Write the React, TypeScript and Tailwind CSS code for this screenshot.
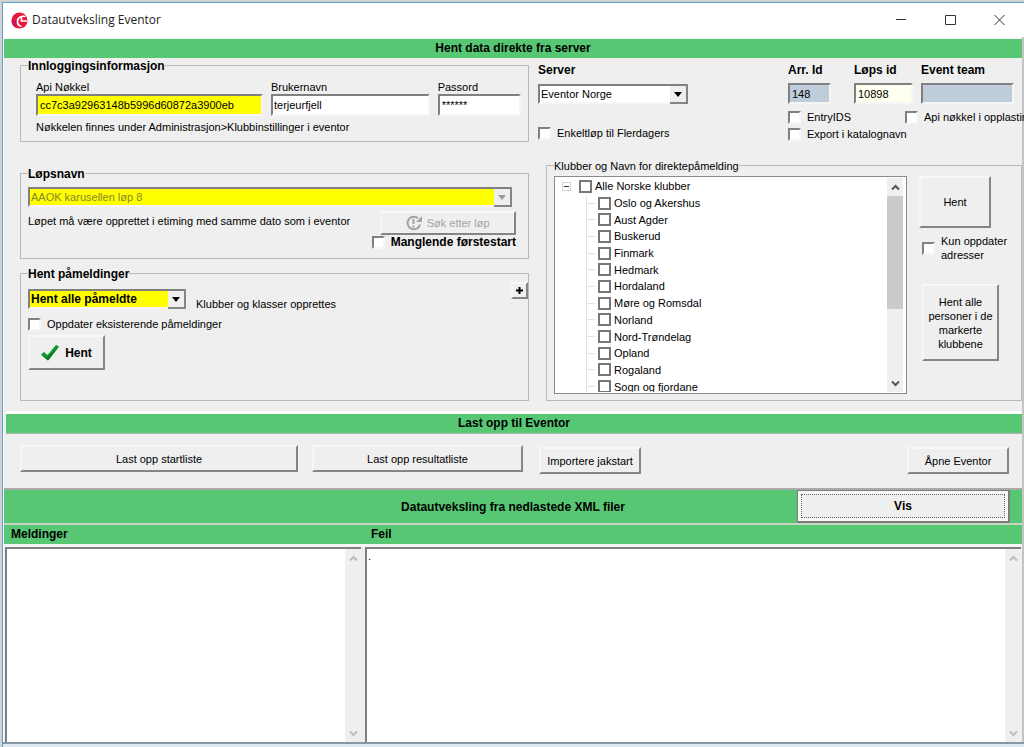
import * as React from "react";
import clsx from "clsx";

const REGIONS = [
  "Oslo og Akershus",
  "Aust Agder",
  "Buskerud",
  "Finmark",
  "Hedmark",
  "Hordaland",
  "Møre og Romsdal",
  "Norland",
  "Nord-Trøndelag",
  "Opland",
  "Rogaland",
  "Sogn og fjordane",
];

const sunken =
  "border-2 border-t-[#808080] border-l-[#808080] border-r-[#f6f6f6] border-b-[#f6f6f6]";

function Button({
  className,
  children,
  ...props
}: React.ComponentProps<"button">) {
  return (
    <button
      type="button"
      className={clsx(
        "border-2 border-t-[#f8f8f8] border-l-[#f6f6f6] border-r-[#858585] border-b-[#858585] bg-[#efefef]",
        className
      )}
      {...props}
    >
      {children}
    </button>
  );
}

function Check({
  label,
  className,
  bold,
}: {
  label: React.ReactNode;
  className?: string;
  bold?: boolean;
}) {
  return (
    <label
      className={clsx(
        "flex items-center gap-[6px] whitespace-nowrap",
        bold && "text-xs leading-[14px] font-bold",
        className
      )}
    >
      <input
        type="checkbox"
        className={clsx(
          "size-[13px] shrink-0 appearance-none bg-white checked:bg-gray-500",
          sunken
        )}
      />
      <span>{label}</span>
    </label>
  );
}

function Group({
  title,
  bold = true,
  className,
  children,
}: {
  title: string;
  bold?: boolean;
  className?: string;
  children: React.ReactNode;
}) {
  return (
    <fieldset
      className={clsx("relative min-w-0 border border-[#b9b9b9] px-[7px]", className)}
    >
      <legend
        className={clsx(
          "pt-[2px]",
          bold ? "text-xs leading-[12px] font-bold" : "text-[11px] leading-[12px]"
        )}
      >
        {title}
      </legend>
      {children}
    </fieldset>
  );
}

function DropDown({
  value,
  label,
  className,
  selectClassName,
  disabled,
}: {
  value: string;
  label: string;
  className?: string;
  selectClassName?: string;
  disabled?: boolean;
}) {
  return (
    <div className={clsx("relative", className)}>
      <select
        aria-label={label}
        disabled={disabled}
        className={clsx(
          "block h-5 w-full appearance-none border-2 border-t-[#808080] border-r-[#909090] border-b-[#f6f6f6] border-l-[#808080] pr-5 pl-px opacity-100",
          selectClassName
        )}
      >
        <option>{value}</option>
      </select>
      <span className="pointer-events-none absolute top-[2px] right-0 flex h-[18px] w-[18px] items-center justify-center border-r-2 border-b-2 border-[#858585] bg-[#efefef]">
        <svg width="8" height="5" viewBox="0 0 8 5" aria-hidden="true">
          <path d="M0 0h8L4 5z" fill={disabled ? "#9a9a9a" : "#000"} />
        </svg>
      </span>
    </div>
  );
}

function Chevron({ up, color }: { up?: boolean; color: string }) {
  return (
    <svg width="9" height="7" viewBox="0 0 9 7" fill="none" aria-hidden="true">
      <path
        d={up ? "M1 5.5 4.5 2 8 5.5" : "M1 1.5 4.5 5 8 1.5"}
        stroke={color}
        strokeWidth="2"
      />
    </svg>
  );
}

function ScrollBar({ color, thumb }: { color: string; thumb?: boolean }) {
  return (
    <div className="flex w-4 shrink-0 flex-col items-center bg-[#efefef]">
      <div className="flex h-[18px] items-center">
        <Chevron up color={color} />
      </div>
      <div className="w-full flex-1">
        {thumb && <div className="h-[113px] w-full bg-[#cbcbcb]" />}
      </div>
      <div className="flex h-[18px] items-center">
        <Chevron color={color} />
      </div>
    </div>
  );
}

function TitleBar() {
  return (
    <header className="flex h-[34px] items-center bg-white pl-2">
      <svg width="17" height="17" viewBox="0 0 17 17" aria-hidden="true">
        <circle cx="8.5" cy="8.5" r="8" fill="#e8173c" />
        <path d="M.5 8.500a8 8 0 0 0 4.500 7.200L7 8.500z" fill="#c8125a" />
        <path
          d="M14.500 4.500C10 3.500 6.500 6 6.500 9.500c0 2.500 1.500 4.500 4 5"
          fill="none"
          stroke="#fff"
          strokeWidth="1.700"
        />
        <path d="M10.500 5v4h6" fill="none" stroke="#fff" strokeWidth="1.700" />
      </svg>
      <h1 className="ml-1 flex-1 font-['Open_Sans',sans-serif] text-xs text-[#222]">
        Datautveksling Eventor
      </h1>
      <div className="flex gap-[9px] pr-[5px]">
        <button type="button" aria-label="Minimer" className="flex h-6 w-10 items-center justify-center">
          <svg width="11" height="11" viewBox="0 0 11 11" stroke="#333">
            <path d="M0 4.500h10" />
          </svg>
        </button>
        <button type="button" aria-label="Maksimer" className="flex h-6 w-10 items-center justify-center">
          <svg width="11" height="11" viewBox="0 0 11 11" stroke="#333" fill="none">
            <path d="M.5.5h10v9H.5z" />
          </svg>
        </button>
        <button type="button" aria-label="Lukk" className="flex h-6 w-10 items-center justify-center">
          <svg width="11" height="11" viewBox="0 0 11 11" stroke="#333">
            <path d="m.5 0 10 10M10.500 0l-10 10" />
          </svg>
        </button>
      </div>
    </header>
  );
}

function LoginGroup() {
  return (
    <Group title="Innloggingsinformasjon" className="h-[84px]">
      <div className="mt-2 grid grid-cols-[226fr_158fr_83fr] gap-2 pl-2">
        <label>
          <span className="block">Api Nøkkel</span>
          <input
            defaultValue="cc7c3a92963148b5996d60872a3900eb"
            className={clsx("block h-[22px] w-full bg-[#ffff00] px-[2px]", sunken)}
          />
        </label>
        <label>
          <span className="block">Brukernavn</span>
          <input
            defaultValue="terjeurfjell"
            className={clsx("block h-[22px] w-full bg-white px-px", sunken)}
          />
        </label>
        <label>
          <span className="block">Passord</span>
          <input
            defaultValue="******"
            className={clsx("block h-[22px] w-full bg-white px-[2px]", sunken)}
          />
        </label>
      </div>
      <p className="mt-1 pl-2">
        Nøkkelen finnes under Administrasjon&gt;Klubbinstillinger i eventor
      </p>
    </Group>
  );
}

function RaceGroup() {
  return (
    <Group title="Løpsnavn" className="mt-6 h-[93px]">
      <DropDown
        label="Løpsnavn"
        value="AAOK karusellen løp 8"
        disabled
        className="mt-[7px] mr-[9px]"
        selectClassName="bg-[#ffff00] text-[#85852a]"
      />
      <div className="flex justify-between">
        <p className="mt-[7px]">
          Løpet må være opprettet i etiming med samme dato som i eventor
        </p>
        <div className="mt-1">
          <Button
            disabled
            className="ml-2 flex h-6 w-[136px] items-center justify-center gap-1 text-[#a3a3a3]"
          >
            <svg width="17" height="16" viewBox="0 0 17 16" fill="none" stroke="#a3a3a3" aria-hidden="true">
              <path d="M12 3.200A6.300 6.300 0 1 0 14 9.500" strokeWidth="2" />
              <path d="M16 1v6h-6z" fill="#a3a3a3" stroke="none" />
              <path d="M7.500 4v5M7.500 10.500v2" strokeWidth="2" />
            </svg>
            Søk etter løp
          </Button>
          <Check label="Manglende førstestart" bold className="mr-[5px]" />
        </div>
      </div>
    </Group>
  );
}

function EntriesGroup() {
  return (
    <Group title="Hent påmeldinger" className="mt-[7px] h-[135px]">
      <Button
        aria-label="Vis mer"
        className="absolute top-[2px] right-0 flex size-[17px] items-center justify-center"
      >
        <svg width="7" height="7" viewBox="0 0 7 7" stroke="#000" strokeWidth="2" aria-hidden="true">
          <path d="M3.500 0v7M0 3.500h7" />
        </svg>
      </Button>
      <div className="mt-[9px] flex items-start gap-[10px]">
        <DropDown
          label="Hent påmeldinger"
          value="Hent alle påmeldte"
          className="w-[158px]"
          selectClassName="bg-[#ffff00] text-xs font-bold"
        />
        <span className="mt-2">Klubber og klasser opprettes</span>
      </div>
      <Check label="Oppdater eksisterende påmeldinger" className="mt-[6px]" />
      <Button className="mt-1 flex h-[35px] w-[77px] items-center justify-center gap-[6px] text-xs font-bold">
        <svg width="18" height="16" viewBox="0 0 18 16" aria-hidden="true">
          <path d="M0 9.500 3 7l3.500 3L15 0l3 1.500L7 15.500z" fill="#0c9a2c" />
          <path d="M0 9.500 6 13 18 1.500 7 15.500z" fill="#08701e" />
        </svg>
        Hent
      </Button>
    </Group>
  );
}

function ServerSettings() {
  return (
    <div className="flex justify-between pt-[5px]">
      <div>
        <h2 className="text-xs leading-[14px] font-bold">Server</h2>
        <DropDown
          label="Server"
          value="Eventor Norge"
          className="mt-[7px] w-[150px]"
          selectClassName="bg-white"
        />
        <Check label="Enkeltløp til Flerdagers" className="mt-[22px]" />
      </div>
      <div className="w-[234px]">
        <div className="flex text-xs leading-[14px] font-bold">
          <label className="w-[66px]">
            Arr. Id
            <input
              defaultValue="148"
              className={clsx("mt-[6px] block h-[21px] w-[43px] bg-[#bfcddb] px-[2px] text-[11px] font-normal", sunken)}
            />
          </label>
          <label className="w-[67px]">
            Løps id
            <input
              defaultValue="10898"
              className={clsx("mt-[6px] block h-[21px] w-[59px] bg-[#fffff0] px-[2px] text-[11px] font-normal", sunken)}
            />
          </label>
          <label>
            Event team
            <input className={clsx("mt-[6px] block h-[21px] w-[93px] bg-[#bfcddb] px-[2px] text-[11px] font-normal", sunken)} />
          </label>
        </div>
        <div className="mt-[6px] flex">
          <Check label="EntryIDS" className="w-[117px] shrink-0" />
          <Check label="Api nøkkel i opplasting" className="shrink-0" />
        </div>
        <Check label="Export i katalognavn" className="mt-[3px]" />
      </div>
    </div>
  );
}

function TreeCheck({ label }: { label: string }) {
  return (
    <label className="flex items-center gap-[3px]">
      <input
        type="checkbox"
        className="size-[13px] shrink-0 appearance-none border-2 border-[#777] bg-white checked:bg-gray-500"
      />
      {label}
    </label>
  );
}

function ClubGroup() {
  return (
    <Group
      title="Klubber og Navn for direktepåmelding"
      bold={false}
      className="mt-[17px] ml-2 h-[243px]"
    >
      <div className="mt-[4px] flex">
        <div className="flex h-[218px] flex-1 border border-[#8a8a8a] bg-white py-px pr-[3px]">
          <div className="flex-1 overflow-hidden pl-[7px]">
            <ul className="grid h-[217px] auto-rows-fr">
              <li className="flex items-center gap-[8px]">
                <span className="flex size-[9px] items-center border border-[#d5d5d5] px-px">
                  <span className="h-px w-full bg-[#333]" />
                </span>
                <TreeCheck label="Alle Norske klubber" />
              </li>
              {REGIONS.map((region) => (
                <li
                  key={region}
                  className="ml-[24px] flex items-center gap-[3px] border-l border-[#e2e2e2]"
                >
                  <span className="h-px w-2 bg-[#e2e2e2]" />
                  <TreeCheck label={region} />
                </li>
              ))}
            </ul>
          </div>
          <ScrollBar color="#555" thumb />
        </div>
        <div className="w-[107px] pl-3">
          <Button className="block h-[52px] w-[72px]">Hent</Button>
          <Check
            className="mt-[6px] ml-[3px]"
            label={
              <>
                Kun oppdater
                <br />
                adresser
              </>
            }
          />
          <Button className="mt-[22px] ml-[3px] block h-[77px] w-[77px] leading-[14px]">
            Hent alle personer i de markerte klubbene
          </Button>
        </div>
      </div>
    </Group>
  );
}

function Memo({ label, value, className }: { label: string; value?: string; className?: string }) {
  return (
    <div className={clsx("flex border-t-2 border-l-2 border-[#808080] bg-white", className)}>
      <textarea
        aria-label={label}
        defaultValue={value}
        className="min-w-0 flex-1 resize-none px-px outline-none"
      />
      <ScrollBar color="#bdbdbd" />
    </div>
  );
}

export default function App() {
  return (
    <div className="flex min-h-screen flex-col overflow-hidden bg-[#d2d2d2] pt-[2px] pl-[2px] font-['Liberation_Sans',Arial,sans-serif] text-[11px] leading-[14px] text-black">
      <div className="flex flex-1 flex-col border-t border-l border-[#5b9fd0] bg-[#efefef]">
        <TitleBar />
        <main className="flex flex-1 flex-col border-r-2 border-l border-r-[#c4c4c4] border-l-white">
          <div className="border-t-2 border-[#f6f6f6]">
            <h2 className="bg-[#58c774] text-center text-xs leading-[19px] font-bold">
              Hent data direkte fra server
            </h2>
          </div>
          <section className="grid grid-cols-[509fr_484fr] gap-[9px] pb-[10px] pl-4">
            <div className="min-w-0">
              <LoginGroup />
              <RaceGroup />
              <EntriesGroup />
            </div>
            <div className="min-w-0">
              <ServerSettings />
              <ClubGroup />
            </div>
          </section>
          <h2 className="ml-[2px] border-t-[3px] border-b border-t-white border-b-[#b4b4b4] bg-[#58c774] text-center text-xs leading-[19px] font-bold">
            Last opp til Eventor
          </h2>
          <section className="flex items-start pt-[11px] pr-[13px] pb-[14px] pl-4">
            <Button className="h-[27px] w-[278px]">Last opp startliste</Button>
            <Button className="ml-[14px] h-[27px] w-[211px]">Last opp resultatliste</Button>
            <Button className="mt-[2px] ml-4 h-[27px] w-[102px]">Importere jakstart</Button>
            <Button className="mt-[2px] ml-auto h-[27px] w-[102px]">Åpne Eventor</Button>
          </section>
          <div className="grid h-[37px] grid-cols-[1fr_auto_1fr] items-center border-t-2 border-b-2 border-t-[#aaa] border-b-[#c9d3c4] bg-[#58c774]">
            <h2 className="col-start-2 text-xs leading-[14px] font-bold">
              Datautveksling fra nedlastede XML filer
            </h2>
            <button
              type="button"
              className="mr-3 h-[33px] w-[213px] justify-self-end border-t border-r-2 border-b-2 border-l border-[#7c7c7c] bg-[#f8f8f8] p-[3px] text-xs font-bold"
            >
              <span className="flex h-full items-center justify-center border border-dotted border-[#666] bg-[#efefef]">
                Vis
              </span>
            </button>
          </div>
          <div className="grid grid-cols-[360fr_658fr] border-b-[3px] border-[#f6f6f6] bg-[#58c774] text-xs leading-[19px] font-bold">
            <h3 className="pl-[7px]">Meldinger</h3>
            <h3 className="pl-[7px]">Feil</h3>
          </div>
          <section className="grid flex-1 grid-cols-[356fr_656fr] gap-1 pr-px pl-px">
            <Memo label="Meldinger" />
            <Memo label="Feil" value="." />
          </section>
        </main>
        <div className="h-[5px] border-t-2 border-[#8796a3] bg-[#dfe9f1]" />
      </div>
    </div>
  );
}
